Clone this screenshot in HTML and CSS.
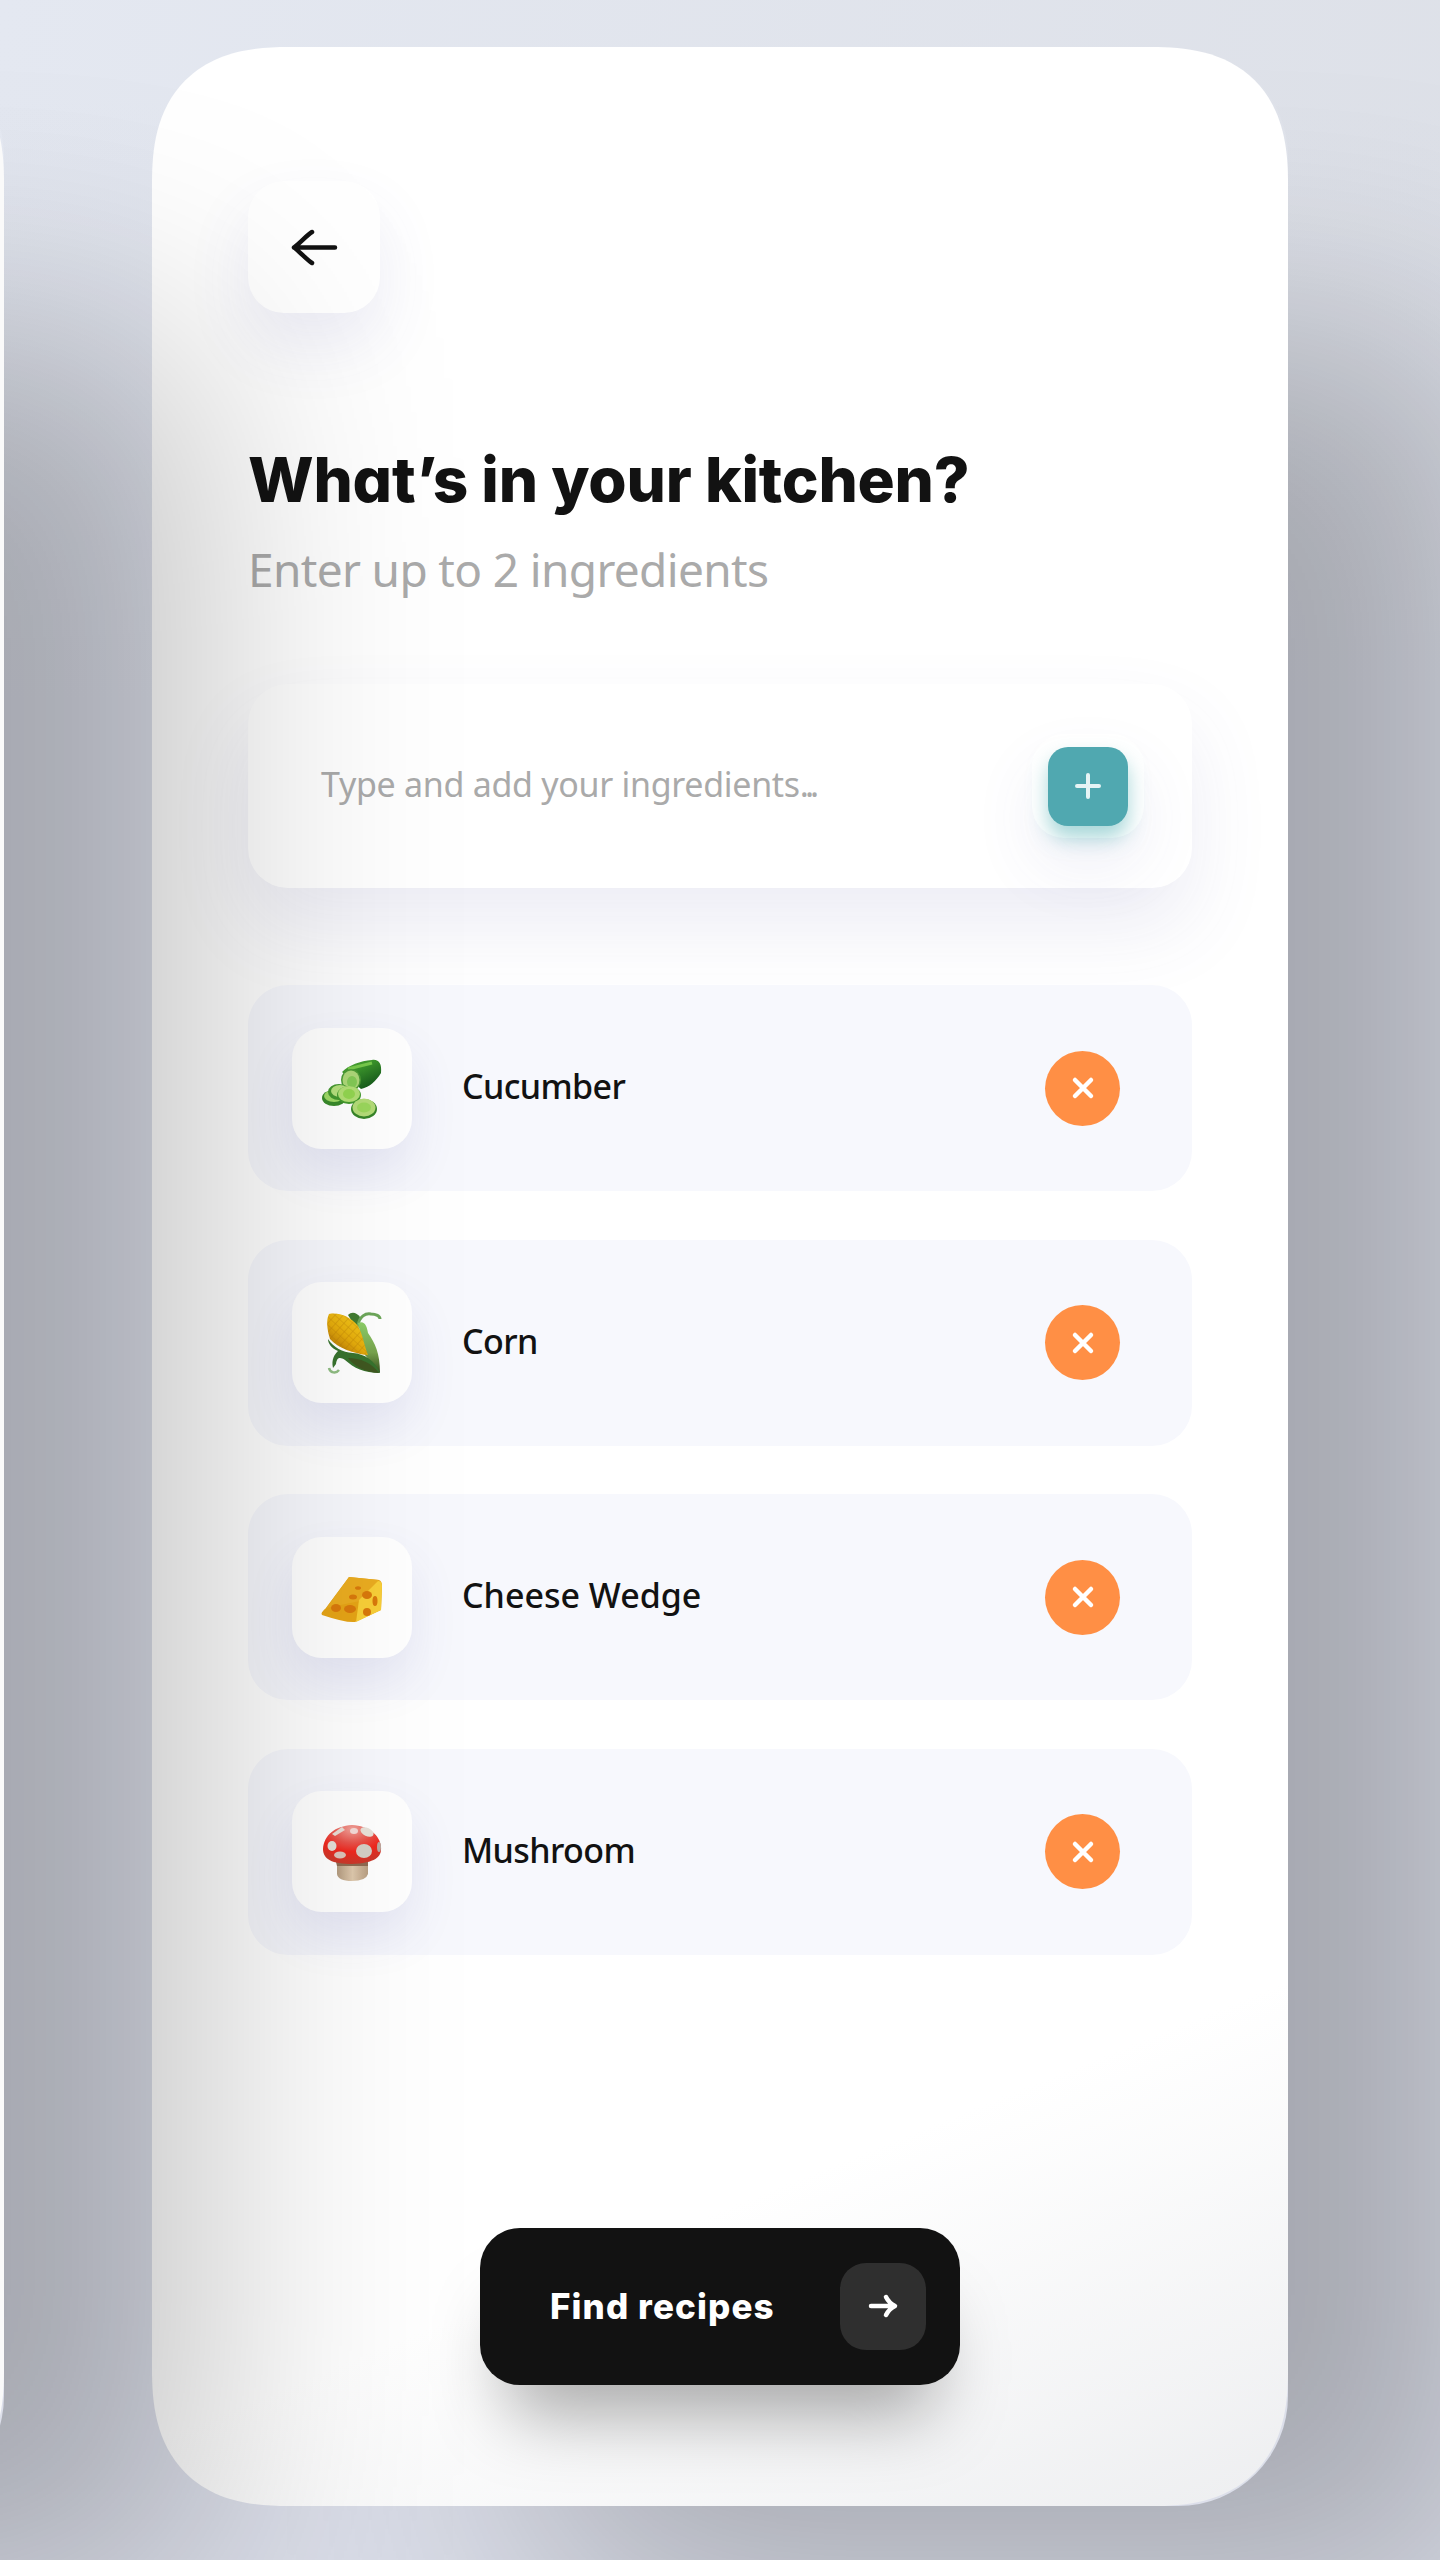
FILE: index.html
```html
<!DOCTYPE html>
<html lang="en">
<head>
<meta charset="utf-8">
<title>What’s in your kitchen?</title>
<link rel="stylesheet" href="styles.css">
</head>
<body>
<div class="stage">
  <div class="slot slot-prev"><div class="phone phone-prev"></div></div>
  <div class="slot">
  <main class="phone phone-main">
    <button class="back" aria-label="Back">
      <svg width="48" height="40" viewBox="0 0 48 40" fill="none" stroke="#121212" stroke-width="4.500" stroke-linecap="round" stroke-linejoin="round"><path d="M45 20.500H4M22 5C17 8 10 16 4 20.500C10 25 17 33 22 36"/></svg>
    </button>
    <h1 class="title">What’s in your kitchen?</h1>
    <p class="subtitle">Enter up to 2 ingredients</p>
    <div class="entry">
      <span class="placeholder">Type and add your ingredients<span class="dots">...</span></span>
      <span class="add-wrap">
        <button class="add" aria-label="Add">
          <svg width="26" height="26" viewBox="0 0 26 26" stroke="#e6f4f5" stroke-width="4" stroke-linecap="round"><path d="M13 2V24M2 13H24"/></svg>
        </button>
      </span>
    </div>
    <ul class="list">
      <li class="row">
        <span class="tile">
          <svg width="60" height="60" viewBox="0 0 60 60">
            <defs><linearGradient id="cuc" x1="0" y1="0" x2=".7" y2="1"><stop offset="0" stop-color="#57b03a"/><stop offset=".45" stop-color="#38902a"/><stop offset="1" stop-color="#13551a"/></linearGradient></defs>
            <path d="M20 14C27 7 38 3 50 2C57 1 60 6 59 15C54 23 48 29 39 31Z" fill="url(#cuc)"/>
            <path d="M26 11L50 5" stroke="#77c94b" stroke-width="3"/>
            <ellipse cx="29" cy="22" rx="10" ry="11" fill="#4c9b35"/><ellipse cx="29" cy="22" rx="8.500" ry="9.500" fill="#add778"/><ellipse cx="30" cy="24" rx="5" ry="6" fill="#83c956"/>
            <ellipse cx="12" cy="40" rx="12" ry="8" fill="#398a2b"/><ellipse cx="12" cy="38" rx="10" ry="6" fill="#9ed966"/>
            <ellipse cx="17" cy="34" rx="11" ry="8" fill="#44972f"/><ellipse cx="18" cy="33" rx="9" ry="6" fill="#b5df7d"/>
            <ellipse cx="27" cy="37" rx="12" ry="9" fill="#439a2e"/><ellipse cx="27" cy="36" rx="11" ry="8" fill="#b2df75"/><ellipse cx="27" cy="36" rx="6" ry="5" fill="#93d551"/>
            <ellipse cx="42" cy="51" rx="13" ry="10" fill="#378529"/><ellipse cx="42" cy="49.500" rx="11.500" ry="9" fill="#b4dc78"/><ellipse cx="42" cy="49.500" rx="7" ry="5" fill="#9bd75c"/>
          </svg>
        </span>
        <span class="name tight">Cucumber</span>
        <button class="remove" aria-label="Remove"><svg width="24" height="24" viewBox="0 0 24 24" stroke="#fff" stroke-width="4.500" stroke-linecap="round"><path d="M4 4L20 20M20 4L4 20"/></svg></button>
      </li>
      <li class="row">
        <span class="tile">
          <svg width="60" height="64" viewBox="0 0 60 64">
            <defs>
              <linearGradient id="cob" x1="1" y1="0" x2=".2" y2="1"><stop offset="0" stop-color="#fbd520"/><stop offset=".6" stop-color="#e5ac0c"/><stop offset="1" stop-color="#b07006"/></linearGradient>
              <pattern id="kernels" width="6" height="6" patternUnits="userSpaceOnUse" patternTransform="rotate(42)"><path d="M0 0H6M0 0V6" stroke="#a96d04" stroke-width="1.200"/></pattern>
              <linearGradient id="husk" x1="0" y1="0" x2="0" y2="1"><stop offset="0" stop-color="#8dcf68"/><stop offset=".6" stop-color="#78a34e"/><stop offset="1" stop-color="#36501d"/></linearGradient>
            </defs>
            <path d="M26 4C30 0 35 2 38 6L36 20Z" fill="#427c32"/>
            <path d="M36 15C37 5 44 2 49 3C54 3 58 5 58 8" fill="none" stroke="#6da75a" stroke-width="3"/>
            <path d="M36 12C43 9 45 16 46 22C53 32 58 42 58 62L43 44Z" fill="url(#husk)"/>
            <path d="M7 3C16 1 28 5 36 15C41 24 42 34 46 44C32 43 16 37 8 28C5 18 4 9 7 3Z" fill="url(#cob)"/>
            <path d="M7 3C16 1 28 5 36 15C41 24 42 34 46 44C32 43 16 37 8 28C5 18 4 9 7 3Z" fill="url(#kernels)" opacity=".45"/>
            <path d="M6 28C12 37 20 41 31 42C42 43 53 49 58 62C42 62 32 57 23 49C18 46 15 46 14 53L11 57C9 48 13 43 16 40C9 37 6 32 6 28Z" fill="#38732e"/>
            <path d="M26 47C38 47 50 52 57 62C43 61 33 56 26 47Z" fill="#405821"/>
            <path d="M7 57C8 62 14 63 17 59" fill="none" stroke="#90bd83" stroke-width="2.500"/>
          </svg>
        </span>
        <span class="name tight">Corn</span>
        <button class="remove" aria-label="Remove"><svg width="24" height="24" viewBox="0 0 24 24" stroke="#fff" stroke-width="4.500" stroke-linecap="round"><path d="M4 4L20 20M20 4L4 20"/></svg></button>
      </li>
      <li class="row">
        <span class="tile">
          <svg width="62" height="60" viewBox="0 0 62 60">
            <path d="M28 10L58 13Q61 14 61 19L60 43L34 55Q25 56 1 48Q-1 46 5 41Z" fill="#e6a416"/>
            <path d="M28 10L58 13L39 34L5 41Z" fill="#eaac20"/>
            <path d="M57 14Q61 14 61 19L60 43L35 55L38 33Z" fill="#f8cf38"/>
            <g fill="#d9790c"><ellipse cx="15" cy="41" rx="5" ry="4"/><ellipse cx="29" cy="42" rx="6" ry="4"/><ellipse cx="32" cy="30" rx="4" ry="2.500"/><ellipse cx="46" cy="28" rx="5" ry="4"/><ellipse cx="54" cy="34" rx="2.500" ry="5"/><ellipse cx="46" cy="45" rx="4" ry="4"/><ellipse cx="37" cy="21" rx="3" ry="1.800"/></g>
          </svg>
        </span>
        <span class="name">Cheese Wedge</span>
        <button class="remove" aria-label="Remove"><svg width="24" height="24" viewBox="0 0 24 24" stroke="#fff" stroke-width="4.500" stroke-linecap="round"><path d="M4 4L20 20M20 4L4 20"/></svg></button>
      </li>
      <li class="row">
        <span class="tile">
          <svg width="60" height="60" viewBox="0 0 60 60">
            <defs>
              <radialGradient id="cap" cx=".5" cy=".1" r=".9"><stop offset="0" stop-color="#f2a29a"/><stop offset=".4" stop-color="#e8524a"/><stop offset=".65" stop-color="#f0281f"/><stop offset="1" stop-color="#c83a2c"/></radialGradient>
              <linearGradient id="stem"><stop offset="0" stop-color="#b39b80"/><stop offset=".5" stop-color="#dfc9ad"/><stop offset="1" stop-color="#b89f82"/></linearGradient>
            </defs>
            <path d="M15 37H46V52Q44 59 30 59Q16 59 15 52Z" fill="url(#stem)"/>
            <path d="M14 40H46V44H15Z" fill="#8f6b52"/>
            <path d="M1 27C2 13 13 4 30 3C47 4 58 13 59 25C60 35 53 41 30 42C10 42 1 37 1 27Z" fill="url(#cap)"/>
            <path d="M10 12L20 5L23 8L13 14Z" fill="#e9ddd5"/>
            <ellipse cx="32" cy="9" rx="4" ry="3" fill="#f5dbd8"/>
            <ellipse cx="45" cy="10" rx="7" ry="4" transform="rotate(25 45 10)" fill="#e9e2da"/>
            <ellipse cx="10" cy="24" rx="4.500" ry="5" fill="#e4ded7"/><ellipse cx="42" cy="29" rx="8" ry="7" fill="#d5cfc6"/><ellipse cx="18" cy="33" rx="6" ry="3.500" fill="#dbc4ba"/><ellipse cx="57" cy="25" rx="2" ry="5" fill="#b9aba2"/>
          </svg>
        </span>
        <span class="name tight">Mushroom</span>
        <button class="remove" aria-label="Remove"><svg width="24" height="24" viewBox="0 0 24 24" stroke="#fff" stroke-width="4.500" stroke-linecap="round"><path d="M4 4L20 20M20 4L4 20"/></svg></button>
      </li>
    </ul>
    <button class="find">
      <span class="find-label">Find recipes</span>
      <span class="find-icon"><svg width="30" height="26" viewBox="0 0 30 26" fill="none" stroke="#fff" stroke-width="4.500" stroke-linecap="round" stroke-linejoin="round"><path d="M3 13H26M18 4C20 8 23 11 27 13C23 15 20 18 18 22"/></svg></span>
    </button>
  </main>
  </div>
</div>
</body>
</html>
```
FILE: styles.css
```css
* { box-sizing: border-box; }
body { margin: 0; font-family: "Noto Sans", sans-serif; color: #121212; }
button { border: 0; padding: 0; font: inherit; display: flex; align-items: center; justify-content: center; }
svg { display: block; overflow: visible; flex: none; }

.stage {
  display: flex;
  gap: 148px;
  width: 1440px;
  height: 2560px;
  padding-top: 47px;
  overflow: hidden;
  background:
    linear-gradient(rgba(220, 223, 235, 0) 100px, rgba(220, 223, 234, 1) 700px),
    linear-gradient(100deg, #e4e8f1, #dcdfe6);
}
.slot {
  flex: none;
  width: 1136px;
  height: 2459px;
  border-radius: 110px;
  box-shadow: 292px 190px 350px -100px rgba(0, 0, 4, .25);
}
.slot-prev { margin-left: -1132px; position: relative; z-index: 1; }
.phone { height: 100%; border-radius: 110px; }
@supports (corner-shape: superellipse(1.3)) {
  .phone { border-radius: 136px; corner-shape: superellipse(1.3); }
}
.phone-prev { background: #fafafa; }
.phone-main {
  display: flex;
  flex-direction: column;
  align-items: stretch;
  padding: 134px 96px 0;
  background: linear-gradient(158deg, #fff 82%, #edeef0);
}

.back {
  width: 132px;
  height: 132px;
  border-radius: 36px;
  background: #fff;
  box-shadow: 0 32px 64px rgba(80, 80, 170, .1);
  padding-right: 1px;
}
.title {
  margin: 129px 0 0;
  font: 800 62px/76px Inter, sans-serif;
  font-feature-settings: "cv11";
  letter-spacing: -.2px;
  white-space: nowrap;
}
.subtitle { margin: 21px 0 0; font-size: 46px; line-height: 60px; letter-spacing: -.65px; color: #aaa; white-space: nowrap; }

.entry {
  display: flex;
  align-items: center;
  justify-content: space-between;
  height: 204px;
  margin-top: 85px;
  padding: 0 48px 0 73px;
  border-radius: 40px;
  background: #fff;
  box-shadow: 0 40px 80px rgba(80, 80, 160, .1);
}
.placeholder { padding-bottom: 5px; font-size: 34px; letter-spacing: -.3px; color: #aaa; white-space: nowrap; }
.dots { letter-spacing: -4px; }
.add-wrap {
  width: 112px;
  height: 104px;
  border-radius: 32px;
  display: flex;
  align-items: center;
  justify-content: center;
  background: #fff;
  box-shadow: 0 32px 64px rgba(80, 80, 160, .08);
}
.add { width: 80px; height: 79px; border-radius: 20px; background: #50a8b0; box-shadow: 0 12px 20px rgba(80, 176, 180, .5); }

.list { display: flex; flex-direction: column; gap: 48.5px; margin: 97px 0 0; padding: 0; list-style: none; }
.row { display: flex; align-items: center; height: 206px; padding: 0 72px 0 44px; border-radius: 40px; background: #f7f8fd; }
.tile {
  display: flex;
  align-items: center;
  justify-content: center;
  width: 120px;
  height: 121px;
  border-radius: 30px;
  background: #fff;
  box-shadow: 0 24px 48px rgba(80, 80, 170, .1);
}
.name { flex: 1; margin-left: 50px; padding-bottom: 4px; font-size: 34px; font-weight: 500; white-space: nowrap; }
.tight { letter-spacing: -.6px; }
.remove { width: 75px; height: 75px; border-radius: 50%; background: #ff8f45; }

.find {
  align-self: center;
  justify-content: space-between;
  width: 480px;
  height: 157px;
  margin-top: 273px;
  padding: 0 34px 0 70px;
  border-radius: 40px;
  background: #121212;
  color: #fff;
  box-shadow: 0 56px 72px -28px rgba(0, 0, 0, .34);
}
.find-label { font: 800 35px/44px Inter, sans-serif; font-feature-settings: "cv11"; letter-spacing: 1.1px; white-space: nowrap; }
.find-icon { display: flex; align-items: center; justify-content: center; width: 86px; height: 87px; border-radius: 26px; background: #2f2f2f; }
```
